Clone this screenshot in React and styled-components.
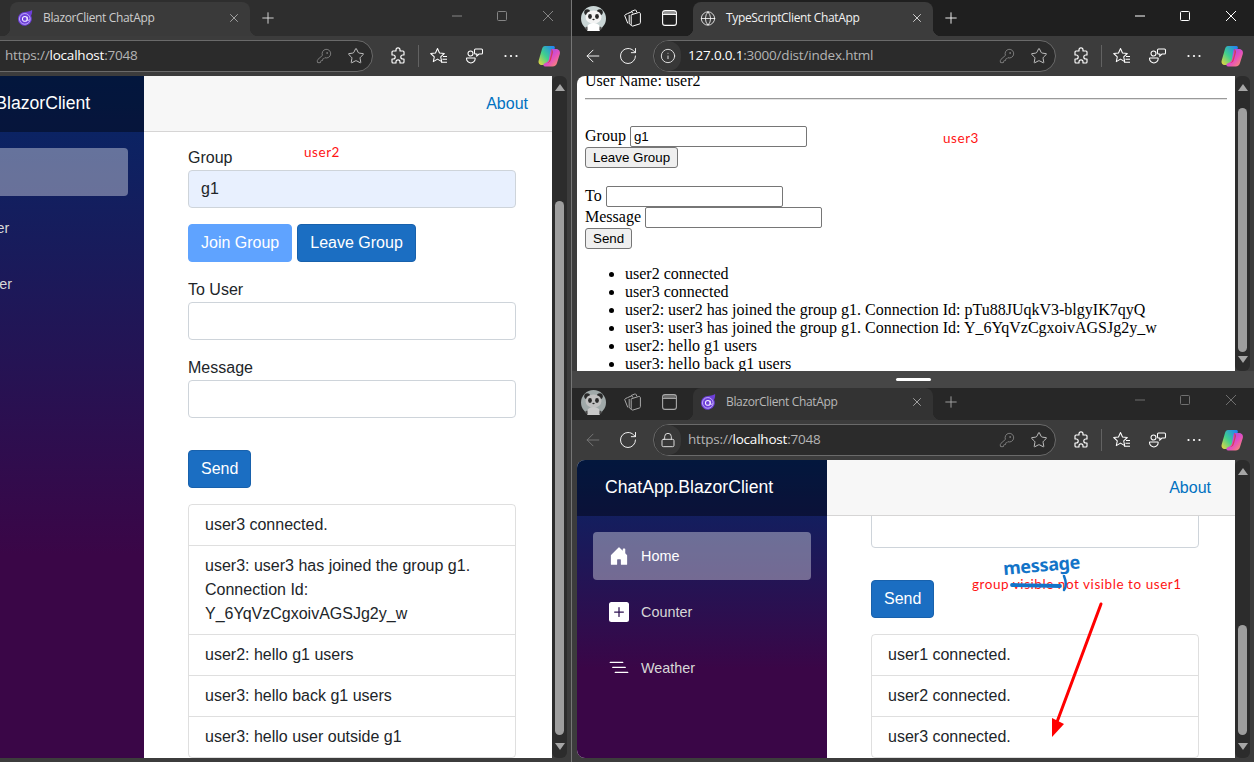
import React from "react";
import styled, { createGlobalStyle } from "styled-components";
import { X, Plus, Globe, ArrowLeft, RotateCw, Info, Lock, KeyRound, Star } from "lucide-react";

const Global = createGlobalStyle`
  html, body { margin: 0; padding: 0; background: #454545; overflow: hidden; }
  * { box-sizing: border-box; }
`;

const tones = {
  focus: { bar: "#1f1f1f", tab: "#3c3c3c", ink: "#ffffff", ctl: "#ffffff", text: "#f2f2f2" },
  blurLeft: { bar: "#2e2e2e", tab: "#3a3a3a", ink: "#e4e4e4", ctl: "#858585", text: "#cdcdcd" },
  blurLow: { bar: "#272727", tab: "#333333", ink: "#a9a9a9", ctl: "#6f6f6f", text: "#b8b8b8" },
};

const Desktop = styled.div`
  position: relative;
  width: 1254px;
  height: 762px;
  overflow: hidden;
  background: #454545;
`;

const WindowFrame = styled.section`
  position: absolute;
  left: ${p => p.$x}px;
  top: ${p => p.$y}px;
  width: 682px;
  height: ${p => p.$h}px;
  display: flex;
  flex-direction: column;
  background: #3c3c3c;
`;

const TitleBar = styled.div`
  display: flex;
  align-items: flex-end;
  flex: none;
  height: ${p => p.$h}px;
  background: ${p => tones[p.$tone].bar};
  color: ${p => tones[p.$tone].ink};
`;

const Slot = styled.div`
  flex: none;
  width: ${p => p.$w}px;
  height: 100%;
  margin-left: ${p => p.$ml || 0}px;
  display: flex;
  align-items: center;
  justify-content: center;
  color: inherit;
  padding-bottom: ${p => p.$pb || 0}px;
`;

const Controls = styled.div`
  flex: none;
  height: 100%;
  display: flex;
  color: ${p => tones[p.$tone].ctl};
`;

const Tab = styled.div`
  position: relative;
  flex: none;
  width: 240px;
  margin-left: 7px;
  height: ${p => p.$h}px;
  background: ${p => tones[p.$tone].tab};
  border-radius: 8px 8px 0 0;
  display: flex;
  align-items: center;
  padding: 0 9px ${p => p.$pb}px 7px;
  font: 12px/1 "Open Sans", sans-serif;
  letter-spacing: -0.35px;
  color: ${p => tones[p.$tone].text};
  &::before, &::after {
    content: "";
    position: absolute;
    bottom: 0;
    width: 8px;
    height: 8px;
  }
  &::before {
    left: -8px;
    background: radial-gradient(circle at 0 0, transparent 8px, ${p => tones[p.$tone].tab} 8.5px);
  }
  &::after {
    right: -8px;
    background: radial-gradient(circle at 100% 0, transparent 8px, ${p => tones[p.$tone].tab} 8.5px);
  }
`;

const TabIcon = styled.span`
  flex: none;
  width: 16px;
  height: 16px;
  margin-right: 10px;
  display: flex;
  align-items: center;
  justify-content: center;
`;

const TabTitle = styled.span`
  flex: 1;
  white-space: nowrap;
`;

const Spring = styled.div`
  flex: 1;
`;

const Toolbar = styled.div`
  flex: none;
  height: 40px;
  display: flex;
  align-items: center;
  background: #3c3c3c;
  color: #ffffff;
`;

const Address = styled.div`
  flex: none;
  width: 403px;
  height: 32px;
  margin-left: 8px;
  display: flex;
  align-items: center;
  border: 1px solid #6a6a6a;
  border-radius: 16px;
  background: #2b2b2b;
  font: 13.5px/1 "Open Sans", sans-serif;
  letter-spacing: -0.2px;
  color: #b4b4b4;
`;

const SecurityBadge = styled.span`
  flex: none;
  width: 26px;
  height: 30px;
  margin-right: 7px;
  margin-left: 1px;
  border-radius: 15px;
  background: #383838;
  color: #e6e6e6;
  display: flex;
  align-items: center;
  justify-content: center;
`;

const UrlHost = styled.b`
  font-weight: 400;
  color: #fff;
`;

const UrlGrow = styled.span`
  flex: 1;
  white-space: nowrap;
`;

const AddressIcon = styled.span`
  flex: none;
  width: 32px;
  display: flex;
  justify-content: center;
  color: ${p => p.$c || "#cfcfcf"};
`;

const ToolSep = styled.div`
  flex: none;
  width: 1px;
  height: 22px;
  margin: 0 3px;
  background: #626262;
`;

const Content = styled.div`
  flex: none;
  height: ${p => p.$h}px;
  display: flex;
  padding-left: 5px;
  background: #3c3c3c;
`;

const Page = styled.div`
  flex: none;
  width: 658px;
  height: 100%;
  display: flex;
  overflow: hidden;
  background: #fff;
  border-top-left-radius: 8px;
  border-bottom-left-radius: ${p => p.$r || 0}px;
`;

const Scrollbar = styled.div`
  flex: none;
  width: 15px;
  height: 100%;
  border-radius: 6px;
  background: #2c2c2c;
  display: flex;
  flex-direction: column;
  align-items: center;
  padding: 8px 0 8px;
`;

const ArrowUp = styled.i`
  flex: none;
  width: 0;
  height: 0;
  border-left: 5px solid transparent;
  border-right: 5px solid transparent;
  border-bottom: 7px solid #a6a6a6;
`;

const ArrowDown = styled.i`
  flex: none;
  width: 0;
  height: 0;
  margin-top: auto;
  border-left: 5px solid transparent;
  border-right: 5px solid transparent;
  border-top: 7px solid #a6a6a6;
`;

const Thumb = styled.div`
  flex: none;
  width: 9px;
  border-radius: 5px;
  background: #9e9e9e;
  height: ${p => p.$h}px;
  margin-top: ${p => p.$top - 15}px;
`;

/* Blazor page */
const Sidebar = styled.aside`
  flex: none;
  width: 250px;
  height: 100%;
  background-image: linear-gradient(180deg, #052767 0%, #3a0647 70%);
`;

const Brand = styled.div`
  height: 56px;
  display: flex;
  align-items: center;
  padding-left: 28px;
  background: rgba(0, 0, 0, 0.4);
  color: #fff;
  font: 17.6px/1 "Liberation Sans", Arial, sans-serif;
`;

const Nav = styled.nav`
  display: flex;
  flex-direction: column;
  gap: 8px;
  padding: 16px 16px 0;
`;

const NavItem = styled.div`
  height: 48px;
  display: flex;
  align-items: center;
  padding-left: 16px;
  gap: 12px;
  border-radius: 4px;
  background: ${p => (p.$on ? "rgba(255,255,255,0.37)" : "transparent")};
  color: ${p => (p.$on ? "#fff" : "#d7d7d7")};
  font: 14.4px/1 "Liberation Sans", Arial, sans-serif;
`;

const Main = styled.main`
  flex: none;
  width: 408px;
  height: 100%;
  overflow: hidden;
  display: flex;
  flex-direction: column;
  font: 16px/24px "Liberation Sans", Arial, sans-serif;
  color: #212529;
`;

const TopRow = styled.header`
  position: relative;
  z-index: 1;
  flex: none;
  height: 56px;
  display: flex;
  align-items: center;
  justify-content: flex-end;
  padding-right: 24px;
  background: #f7f7f7;
  border-bottom: 1px solid #d6d5d5;
`;

const AboutLink = styled.a`
  color: #0071c1;
`;

const Body = styled.div`
  flex: none;
  padding: 0 36px 0 44px;
  margin-top: ${p => p.$mt}px;
`;

const FieldLabel = styled.label`
  display: block;
  height: 25px;
  padding-top: 1px;
`;

const Field = styled.div`
  height: 38px;
  padding: 6px 12px;
  border: 1px solid #ced4da;
  border-radius: 4px;
  background: ${p => (p.$filled ? "#e8f0fe" : "#fff")};
  color: #212529;
  margin-bottom: ${p => p.$mb}px;
`;

const ButtonRow = styled.div`
  display: flex;
  gap: 5px;
  margin-bottom: ${p => p.$mb}px;
`;

const Btn = styled.button`
  height: 38px;
  padding: 6px 12px;
  border: 1px solid ${p => (p.$off ? "#5fa3ff" : "#1861ac")};
  border-radius: 4px;
  background: ${p => (p.$off ? "#5fa3ff" : "#1b6ec2")};
  color: #fff;
  font: 16px/24px "Liberation Sans", Arial, sans-serif;
`;

const List = styled.ul`
  list-style: none;
  margin: 0;
  padding: 0;
  border: 1px solid rgba(0, 0, 0, 0.125);
  border-radius: 4px;
`;

const ListItem = styled.li`
  padding: 8px 16px;
  & + & {
    border-top: 1px solid rgba(0, 0, 0, 0.125);
  }
`;

/* Plain html page */
const PlainDoc = styled.div`
  flex: 1;
  padding: 0 8px;
  margin-top: -4px;
  font: 16px/18px "Liberation Serif", "Times New Roman", serif;
  color: #000;
`;

const Rule = styled.hr`
  margin: 8px 0;
  border: 0;
  border-top: 1px solid #9a9a9a;
  border-bottom: 1px solid #e4e4e4;
`;

const Gap = styled.div`
  height: 18px;
`;

const PlainRow = styled.div`
  display: flex;
  align-items: flex-start;
  height: 21px;
  gap: 4px;
`;

const PlainLabel = styled.span`
  margin-top: 1px;
`;

const PlainInput = styled.div`
  width: 177px;
  height: 21px;
  padding: 1px 3px;
  border: 1px solid #767676;
  border-radius: 2px;
  font: 13.33px/17px "Liberation Sans", Arial, sans-serif;
`;

const PlainButton = styled.button`
  display: block;
  height: 21px;
  padding: 1px 7px;
  border: 1px solid #767676;
  border-radius: 3px;
  background: #efefef;
  color: #000;
  font: 13.33px/17px "Liberation Sans", Arial, sans-serif;
`;

const PlainList = styled.ul`
  margin: 16px 0;
  padding-left: 40px;
`;

/* Overlays */
const Splitter = styled.div`
  position: absolute;
  left: 572px;
  top: 371px;
  width: 682px;
  height: 17px;
  background: #464646;
  display: flex;
  align-items: center;
  justify-content: center;
`;

const SplitHandle = styled.div`
  width: 35px;
  height: 3px;
  border-radius: 2px;
  background: #fff;
`;

const WindowSeam = styled.div`
  position: absolute;
  left: 571px;
  top: 0;
  width: 1px;
  height: 762px;
  background: #767676;
`;

const Note = styled.div`
  position: absolute;
  left: ${p => p.$x}px;
  top: ${p => p.$y}px;
  color: #ff1414;
  font: 13.5px/18px Lato, sans-serif;
  letter-spacing: 0.55px;
  white-space: nowrap;
`;

const Scrawl = styled.div`
  position: absolute;
  left: 1004px;
  top: 557px;
  color: #1374c8;
  font: bold 18px/22px "Noto Sans", sans-serif;
  letter-spacing: -0.3px;
  transform: rotate(-5deg);
  transform-origin: left bottom;
  white-space: nowrap;
`;

const Ink = styled.svg`
  position: absolute;
  left: ${p => p.$x}px;
  top: ${p => p.$y}px;
  pointer-events: none;
`;

/* Icons */
const Panda = ({ dim }) => (
  <svg width="25" height="25" viewBox="0 0 25 25" opacity={dim ? 0.75 : 1}>
    <circle cx="12.5" cy="12.5" r="12.5" fill="#c9d5d5" />
    <circle cx="6.2" cy="6.2" r="3" fill="#2a2a2a" />
    <circle cx="18.8" cy="6.2" r="3" fill="#2a2a2a" />
    <ellipse cx="12.5" cy="11" rx="8" ry="6.600" fill="#f4f4f4" />
    <ellipse cx="9" cy="10.500" rx="1.900" ry="2.400" fill="#2a2a2a" />
    <ellipse cx="16" cy="10.500" rx="1.900" ry="2.400" fill="#2a2a2a" />
    <ellipse cx="12.5" cy="13.500" rx="1.200" ry="0.800" fill="#2a2a2a" />
    <path d="M6 25v-4c1-3 4-4 6.500-4s5.500 1 6.500 4v4z" fill="#fff" />
    <path d="M6.500 20.500c-1.500.3-2.500 1.200-2.800 2 1 1 2 1.700 3 2.200z M18.500 20.500c1.500.3 2.500 1.200 2.800 2-1 1-2 1.700-3 2.200z" fill="#555" />
  </svg>
);

const Workspaces = () => (
  <svg width="20" height="20" viewBox="0 0 20 20" fill="none" stroke="currentColor" strokeWidth="1" strokeLinejoin="round">
    <path d="M8 3.600 11.800 2c.6-.2 1.100 0 1.300.5l.7 1.700" />
    <path d="M4.600 5.600 8.200 4c.6-.2 1.100 0 1.300.5l.4 1" />
    <path d="M4.600 5.600 2.400 6.600c-.6.300-.8.800-.6 1.300l3 7.500" />
    <path d="M8.300 6.800l7.300-2.300c.9-.3 1.800.4 1.800 1.300v8.800c0 .7-.4 1.200-1 1.400l-6.400 2c-.9.3-1.800-.4-1.800-1.300V8.200c0-.7 0-1.200.1-1.400z" />
    <path d="M6.200 7v7.800c0 .8.400 1.400 1 1.800l1.300.7" />
  </svg>
);

const VerticalTabs = () => (
  <svg width="17" height="18" viewBox="0 0 17 18" fill="none" stroke="currentColor" strokeWidth="1.1">
    <rect x="1.600" y="1.600" width="13.800" height="14.800" rx="2.500" />
    <path d="M1.600 5.400h13.800" />
    <path d="M2.500 2.200h12v3h-12z" fill="currentColor" stroke="none" opacity="0.5" />
  </svg>
);

const BlazorMark = () => (
  <svg width="18" height="18" viewBox="0 0 18 18" fill="none">
    <path d="M1 10a7.800 7.800 0 0 1 7.800-7.800c2.400 0 5.200-.6 8.200-2.200.2 2.600-.3 5-1.200 6.500A7.800 7.800 0 1 1 1 10z" fill="#6d3fd8" />
    <circle cx="8.800" cy="10" r="6" stroke="#cbb9ff" strokeWidth="1" />
    <circle cx="8.800" cy="10" r="2.700" stroke="#f5f1ff" strokeWidth="1.200" />
    <path d="M11.500 7.500v3.300c0 1.200 1.800 1.200 2.200 0" stroke="#f5f1ff" strokeWidth="1" />
  </svg>
);

const Minimize = () => (
  <svg width="12" height="12" viewBox="0 0 12 12" stroke="currentColor" strokeWidth="1"><path d="M1 6h10" /></svg>
);
const Maximize = () => (
  <svg width="12" height="12" viewBox="0 0 12 12" fill="none" stroke="currentColor" strokeWidth="1"><rect x="1.500" y="1.500" width="9" height="9" rx="1" /></svg>
);
const CloseThin = () => (
  <svg width="12" height="12" viewBox="0 0 12 12" stroke="currentColor" strokeWidth="1"><path d="M1 1l10 10M11 1L1 11" /></svg>
);

const PuzzlePiece = () => (
  <svg width="20" height="20" viewBox="0 0 20 20" fill="none" stroke="currentColor" strokeWidth="1.150" strokeLinejoin="round">
    <path d="M8 3.800a2 2 0 0 1 4 0V5h3a1 1 0 0 1 1 1v3h-1.200a2 2 0 0 0 0 4H16v3a1 1 0 0 1-1 1h-3v-1.200a2 2 0 0 0-4 0V17H5a1 1 0 0 1-1-1v-3h1.200a2 2 0 0 0 0-4H4V6a1 1 0 0 1 1-1h3z" />
  </svg>
);

const Favorites = () => (
  <svg width="20" height="20" viewBox="0 0 20 20" fill="none" stroke="currentColor" strokeWidth="1.050" strokeLinejoin="round">
    <path d="M8.500 2.500 10.500 7l4.800.5-3.600 3.300 1 4.800-4.200-2.500-4.200 2.500 1-4.800L1.700 7.500 6.500 7z" />
    <path d="M14 10.500h4M13.500 13.300H18M12 16.200h6" />
  </svg>
);

const Split = () => (
  <svg width="20" height="20" viewBox="0 0 20 20" fill="none" stroke="currentColor" strokeWidth="1.050">
    <circle cx="5.500" cy="7.500" r="2.500" />
    <path d="M1.800 12h8c.2 0 .4.300.4.500 0 2.500-2 4.500-4.300 4.500S1.500 15 1.500 12.500c0-.2.100-.5.300-.5z" />
    <path d="M10.500 3h6c.6 0 1 .4 1 1v3c0 .6-.4 1-1 1h-2.500L11.800 10V8h-1.300c-.6 0-1-.4-1-1V4c0-.6.4-1 1-1z" />
  </svg>
);

const Dots = () => (
  <svg width="16" height="4" viewBox="0 0 16 4" fill="currentColor">
    <circle cx="2.500" cy="2" r="1.100" /><circle cx="8" cy="2" r="1.100" /><circle cx="13.500" cy="2" r="1.100" />
  </svg>
);

const Copilot = ({ id }) => (
  <svg width="24" height="24" viewBox="0 0 24 24">
    <defs>
      <linearGradient id={id + "a"} x1="0" y1="1" x2="1" y2="0">
        <stop offset="0" stopColor="#f2d83a" />
        <stop offset="0.45" stopColor="#3fcf8e" />
        <stop offset="1" stopColor="#1f7bff" />
      </linearGradient>
      <linearGradient id={id + "b"} x1="0" y1="0" x2="1" y2="1">
        <stop offset="0" stopColor="#7a4dff" />
        <stop offset="0.55" stopColor="#e44fc0" />
        <stop offset="1" stopColor="#ff9a5a" />
      </linearGradient>
    </defs>
    <path d="M8 2h8.500c1 0 1.600 1 1.300 2L13 19c-.5 1.500-2 2-3 2H5c-2.500 0-4-2-3.300-4.500L5 5c.5-2 1.500-3 3-3z" fill={`url(#${id}a)`} />
    <path d="M14 5h5c3 0 4.500 2.500 3.800 5L20 19c-.6 2-2 3.500-4.500 3.500H8c-1 0-1.800-1-1.500-2 .3-.8 1-1 2-1.500 2-.8 3-2 3.500-4l1-6c.2-1.500.5-3 1-3.500z" fill={`url(#${id}b)`} />
    <path d="M14 5c.8 2 .5 4 0 6l-1.500 5c-.5 1.500-1.200 2.500-2.500 3 2.200-.1 3.500-1.500 4-3.500l2-7c.2-.8-.5-3.500-2-3.500z" fill="#d8352a" opacity="0.7" />
  </svg>
);

const House = () => (
  <svg width="20" height="20" viewBox="0 0 16 16" fill="#fff"><path d="M6.500 14.500v-3.505c0-.245.25-.495.5-.495h2c.25 0 .5.25.5.5v3.500a.5.5 0 0 0 .5.500h4a.5.5 0 0 0 .5-.500v-7a.5.5 0 0 0-.146-.354L13 5.793V2.500a.5.5 0 0 0-.5-.5h-1a.5.5 0 0 0-.5.500v1.293L8.354 1.146a.5.5 0 0 0-.708 0l-6 6A.5.5 0 0 0 1.500 7.500v7a.5.5 0 0 0 .5.500h4a.5.5 0 0 0 .5-.5z" /></svg>
);
const PlusSquare = () => (
  <svg width="20" height="20" viewBox="0 0 16 16" fill="#fff"><path d="M2 0a2 2 0 0 0-2 2v12a2 2 0 0 0 2 2h12a2 2 0 0 0 2-2V2a2 2 0 0 0-2-2H2zm6.500 4.500v3h3a.5.5 0 0 1 0 1h-3v3a.5.5 0 0 1-1 0v-3h-3a.5.5 0 0 1 0-1h3v-3a.5.5 0 0 1 1 0z" /></svg>
);
const ListNested = () => (
  <svg width="20" height="20" viewBox="0 0 16 16" fill="#fff"><path fillRule="evenodd" d="M4.500 11.500A.5.5 0 0 1 5 11h10a.5.5 0 0 1 0 1H5a.5.5 0 0 1-.5-.5zm-2-4A.5.5 0 0 1 3 7h10a.5.5 0 0 1 0 1H3a.5.5 0 0 1-.5-.5zm-2-4A.5.5 0 0 1 1 3h10a.5.5 0 0 1 0 1H1a.5.5 0 0 1-.5-.5z" /></svg>
);

/* Composite parts */
const BrowserChrome = ({ tone, titleH, tabIcon, title, badge, scheme, host, rest, gid }) => {
  const low = titleH === 32;
  const up = low ? 4 : 0;
  return (
    <>
      <TitleBar $h={titleH} $tone={tone}>
        <Slot $w={42} $pb={up}><Panda dim={tone !== "focus"} /></Slot>
        <Slot $w={38} $pb={up}><Workspaces /></Slot>
        <Slot $w={34} $pb={up}><VerticalTabs /></Slot>
        <Tab $tone={tone} $h={low ? 32 : 34} $pb={low ? 4 : 2}>
          <TabIcon>{tabIcon}</TabIcon>
          <TabTitle>{title}</TabTitle>
          <X size={14} strokeWidth={1.4} color={tone === "focus" ? "#eee" : "#b8b8b8"} />
        </Tab>
        <Slot $w={36} $pb={up}><Plus size={18} strokeWidth={1.2} /></Slot>
        <Spring />
        <Controls $tone={tone}>
          <Slot $w={45} $pb={low ? 8 : 4}><Minimize /></Slot>
          <Slot $w={45} $pb={low ? 8 : 4}><Maximize /></Slot>
          <Slot $w={47} $pb={low ? 8 : 4}><CloseThin /></Slot>
        </Controls>
      </TitleBar>
      <Toolbar>
        <Slot $w={36} $ml={3}><ArrowLeft size={20} strokeWidth={1.1} color={badge === "lock" ? "#7a7a7a" : undefined} /></Slot>
        <Slot $w={34}><RotateCw size={20} strokeWidth={1.1} /></Slot>
        <Address>
          <SecurityBadge>{badge === "lock" ? <Lock size={16} strokeWidth={1.4} /> : <Info size={16} strokeWidth={1.4} />}</SecurityBadge>
          <UrlGrow>{scheme}<UrlHost>{host}</UrlHost>{rest}</UrlGrow>
          <AddressIcon $c="#8f8f8f"><KeyRound size={16} strokeWidth={1.2} /></AddressIcon>
          <AddressIcon><Star size={18} strokeWidth={1.2} /></AddressIcon>
        </Address>
        <Slot $w={34} $ml={8}><PuzzlePiece /></Slot>
        <ToolSep />
        <Slot $w={34}><Favorites /></Slot>
        <Slot $w={34} $ml={2}><Split /></Slot>
        <Slot $w={34} $ml={2}><Dots /></Slot>
        <Slot $w={34} $ml={4}><Copilot id={gid} /></Slot>
      </Toolbar>
    </>
  );
};

const BlazorSidebar = () => (
  <Sidebar>
    <Brand>ChatApp.BlazorClient</Brand>
    <Nav>
      <NavItem $on><House />Home</NavItem>
      <NavItem><PlusSquare />Counter</NavItem>
      <NavItem><ListNested />Weather</NavItem>
    </Nav>
  </Sidebar>
);

const Bar = ({ thumbTop, thumbH }) => (
  <Scrollbar>
    <ArrowUp />
    <Thumb $top={thumbTop} $h={thumbH} />
    <ArrowDown />
  </Scrollbar>
);

export default function App() {
  return (
    <Desktop>
      <Global />

      <WindowFrame $x={-111} $y={0} $h={762}>
        <BrowserChrome gid="cpa" tone="blurLeft" titleH={36} tabIcon={<BlazorMark />} title="BlazorClient ChatApp" badge="lock" scheme="https://" host="localhost" rest=":7048" />
        <Content $h={682}>
          <Page>
            <BlazorSidebar />
            <Main>
              <TopRow><AboutLink>About</AboutLink></TopRow>
              <Body $mt={13}>
                <FieldLabel>Group</FieldLabel>
                <Field $filled $mb={16}>g1</Field>
                <ButtonRow $mb={15}>
                  <Btn $off>Join Group</Btn>
                  <Btn>Leave Group</Btn>
                </ButtonRow>
                <FieldLabel>To User</FieldLabel>
                <Field $mb={15} />
                <FieldLabel>Message</FieldLabel>
                <Field $mb={32} />
                <ButtonRow $mb={16}><Btn>Send</Btn></ButtonRow>
                <List>
                  <ListItem>user3 connected.</ListItem>
                  <ListItem>user3: user3 has joined the group g1. Connection Id: Y_6YqVzCgxoivAGSJg2y_w</ListItem>
                  <ListItem>user2: hello g1 users</ListItem>
                  <ListItem>user3: hello back g1 users</ListItem>
                  <ListItem>user3: hello user outside g1</ListItem>
                </List>
              </Body>
            </Main>
          </Page>
          <Bar thumbTop={125} thumbH={534} />
        </Content>
      </WindowFrame>

      <WindowFrame $x={572} $y={0} $h={371}>
        <BrowserChrome gid="cpb" tone="focus" titleH={36} tabIcon={<Globe size={17} strokeWidth={1.2} color="#fff" />} title="TypeScriptClient ChatApp" badge="info" scheme="" host="127.0.0.1" rest=":3000/dist/index.html" />
        <Content $h={295}>
          <Page>
            <PlainDoc>
              <div>User Name: user2</div>
              <Rule />
              <Gap />
              <PlainRow><PlainLabel>Group</PlainLabel><PlainInput>g1</PlainInput></PlainRow>
              <PlainButton>Leave Group</PlainButton>
              <Gap />
              <PlainRow><PlainLabel>To</PlainLabel><PlainInput /></PlainRow>
              <PlainRow><PlainLabel>Message</PlainLabel><PlainInput /></PlainRow>
              <PlainButton>Send</PlainButton>
              <PlainList>
                <li>user2 connected</li>
                <li>user3 connected</li>
                <li>user2: user2 has joined the group g1. Connection Id: pTu88JUqkV3-blgyIK7qyQ</li>
                <li>user3: user3 has joined the group g1. Connection Id: Y_6YqVzCgxoivAGSJg2y_w</li>
                <li>user2: hello g1 users</li>
                <li>user3: hello back g1 users</li>
              </PlainList>
            </PlainDoc>
          </Page>
          <Bar thumbTop={32} thumbH={244} />
        </Content>
      </WindowFrame>

      <WindowFrame $x={572} $y={388} $h={374}>
        <BrowserChrome gid="cpc" tone="blurLow" titleH={32} tabIcon={<BlazorMark />} title="BlazorClient ChatApp" badge="lock" scheme="https://" host="localhost" rest=":7048" />
        <Content $h={298}>
          <Page $r={8}>
            <BlazorSidebar />
            <Main>
              <TopRow><AboutLink>About</AboutLink></TopRow>
              <Body $mt={-6}>
                <Field $mb={32} />
                <ButtonRow $mb={16}><Btn>Send</Btn></ButtonRow>
                <List>
                  <ListItem>user1 connected.</ListItem>
                  <ListItem>user2 connected.</ListItem>
                  <ListItem>user3 connected.</ListItem>
                </List>
              </Body>
            </Main>
          </Page>
          <Bar thumbTop={165} thumbH={110} />
        </Content>
      </WindowFrame>

      <WindowSeam />
      <Splitter><SplitHandle /></Splitter>

      <Note $x={304} $y={143}>user2</Note>
      <Note $x={943} $y={129}>user3</Note>
      <Note $x={959} $y={476}>user1</Note>
      <Note $x={945} $y={494}>not in group g1</Note>
      <Note $x={972} $y={575}>group visible not visible to user1</Note>
      <Scrawl>message</Scrawl>
      <Ink $x={1004} $y={575} width="70" height="26" viewBox="0 0 70 26" fill="none">
        <path d="M8 10 56 11" stroke="#1374c8" strokeWidth="3.800" strokeLinecap="round" />
        <path d="M60 1c2 5 3 10 0 14" stroke="#1374c8" strokeWidth="2.500" strokeLinecap="round" />
      </Ink>
      <Ink $x={1045} $y={600} width="60" height="140" viewBox="0 0 60 140" fill="none">
        <path d="M56 4 L12 122" stroke="#f00" strokeWidth="3" strokeLinecap="round" />
        <path d="M7 137 L7 118 L19 124 Z" fill="#f00" />
      </Ink>
    </Desktop>
  );
}
